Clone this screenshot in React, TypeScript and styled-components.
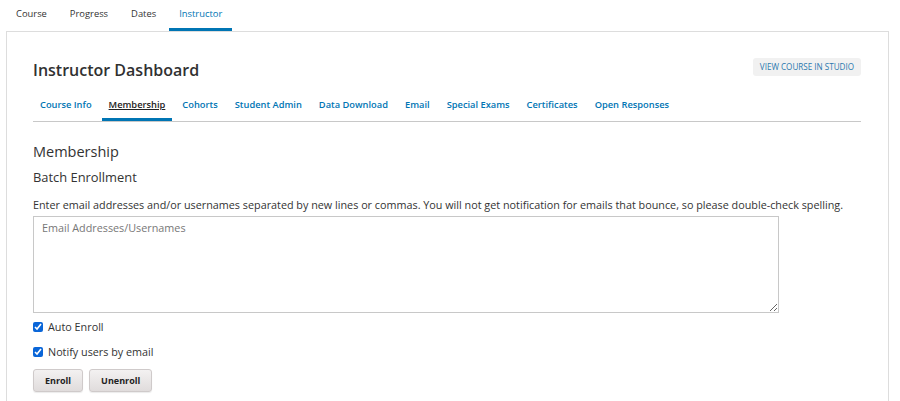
import styled, { createGlobalStyle } from "styled-components";

// ── Global ────────────────────────────────────────────────────────────────────

const GlobalStyle = createGlobalStyle`
  html, body {
    margin: 0;
    padding: 0;
    background: #fff;
    font-family: "Open Sans", "Noto Sans", sans-serif;
    color: #333;
  }
`;

// ── Styled components ─────────────────────────────────────────────────────────

const Page = styled.div`
  width: 900px;
`;

const CourseNav = styled.nav`
  display: flex;
  gap: 3px;
  padding: 0 6px;
  height: 31px;
`;

const CourseNavItem = styled.a<{ $active?: boolean }>`
  display: flex;
  align-items: center;
  box-sizing: border-box;
  height: 31px;
  padding: 0 10px 1px;
  font-size: 9.4px;
  color: ${({ $active }) => ($active ? "#0075b4" : "#333")};
  text-decoration: none;
  border-bottom: 3px solid ${({ $active }) => ($active ? "#0075b4" : "transparent")};
`;

const Panel = styled.section`
  margin-left: 6px;
  width: 883px;
  box-sizing: border-box;
  border: 1px solid #ddd;
  border-bottom: none;
  padding: 27px 27px 20px 26px;
`;

const HeaderRow = styled.div`
  display: flex;
  justify-content: space-between;
  align-items: flex-start;
`;

const Title = styled.h1`
  margin: 0;
  font-size: 16px;
  font-weight: 600;
  line-height: 22px;
  color: #313131;
`;

const StudioButton = styled.a`
  display: inline-block;
  margin-top: -1px;
  padding: 0 7px;
  height: 18px;
  line-height: 18px;
  font-size: 8.1px;
  color: #2a78ae;
  background: #f1f1f1;
  border-radius: 3px;
  text-decoration: none;
`;

const Tabs = styled.div`
  display: flex;
  gap: 3px;
  margin-top: 10px;
  border-bottom: 1px solid #c8c8c8;
`;

const Tab = styled.a<{ $active?: boolean }>`
  padding: 7px 7px 6px;
  font-size: 9.3px;
  font-weight: 600;
  line-height: 14px;
  color: ${({ $active }) => ($active ? "#222" : "#0075b4")};
  text-decoration: ${({ $active }) => ($active ? "underline" : "none")};
  border-bottom: 3px solid ${({ $active }) => ($active ? "#0075b4" : "transparent")};
  white-space: nowrap;
`;

const SectionTitle = styled.h2`
  margin: 20px 0 0;
  font-size: 14.5px;
  font-weight: 400;
  line-height: 20px;
  color: #333;
`;

const SubTitle = styled.h3`
  margin: 6px 0 0;
  font-size: 12.9px;
  font-weight: 400;
  line-height: 18px;
  color: #333;
`;

const Help = styled.p`
  margin: 11px 0 0;
  font-size: 10.8px;
  line-height: 16px;
  color: #333;
  white-space: nowrap;
`;

const EmailBox = styled.textarea`
  display: block;
  margin-top: 3px;
  width: 746px;
  height: 97px;
  box-sizing: border-box;
  border: 1px solid #c8c8c8;
  padding: 3px 8px;
  font-family: "Open Sans", "Noto Sans", sans-serif;
  font-size: 10.8px;
  line-height: 15px;
  color: #333;
  resize: vertical;
  &::placeholder {
    color: #777;
  }
`;

const CheckRow = styled.label<{ $first?: boolean }>`
  display: flex;
  align-items: center;
  margin-top: ${({ $first }) => ($first ? "6px" : "9px")};
  font-size: 10.8px;
  line-height: 16px;
  color: #333;
  input {
    margin: 0 5px 0 0;
    width: 10px;
    height: 10px;
    accent-color: #0a66d8;
  }
`;

const ButtonRow = styled.div`
  display: flex;
  gap: 6px;
  margin-top: 9px;
`;

const ActionButton = styled.button`
  height: 23px;
  padding: 0 11px;
  font-family: "Open Sans", "Noto Sans", sans-serif;
  font-size: 9px;
  font-weight: 700;
  color: #222;
  background: linear-gradient(#f3f1f1, #e0dcdc);
  border: 1px solid #cfcaca;
  border-radius: 3px;
  box-shadow: 0 1px 1px rgba(0, 0, 0, 0.08);
  cursor: pointer;
`;

// ── Data ──────────────────────────────────────────────────────────────────────

const courseNav = ["Course", "Progress", "Dates", "Instructor"];

const tabs = [
  "Course Info",
  "Membership",
  "Cohorts",
  "Student Admin",
  "Data Download",
  "Email",
  "Special Exams",
  "Certificates",
  "Open Responses",
];

// ── App ───────────────────────────────────────────────────────────────────────

export default function App() {
  return (
    <Page>
      <GlobalStyle />
      <CourseNav>
        {courseNav.map((item) => (
          <CourseNavItem key={item} $active={item === "Instructor"}>
            {item}
          </CourseNavItem>
        ))}
      </CourseNav>

      <Panel>
        <HeaderRow>
          <Title>Instructor Dashboard</Title>
          <StudioButton>VIEW COURSE IN STUDIO</StudioButton>
        </HeaderRow>

        <Tabs>
          {tabs.map((tab) => (
            <Tab key={tab} $active={tab === "Membership"}>
              {tab}
            </Tab>
          ))}
        </Tabs>

        <SectionTitle>Membership</SectionTitle>
        <SubTitle>Batch Enrollment</SubTitle>
        <Help>
          Enter email addresses and/or usernames separated by new lines or commas. You will not
          get notification for emails that bounce, so please double-check spelling.
        </Help>
        <EmailBox placeholder="Email Addresses/Usernames" />

        <CheckRow $first>
          <input type="checkbox" defaultChecked />
          Auto Enroll
        </CheckRow>
        <CheckRow>
          <input type="checkbox" defaultChecked />
          Notify users by email
        </CheckRow>

        <ButtonRow>
          <ActionButton>Enroll</ActionButton>
          <ActionButton>Unenroll</ActionButton>
        </ButtonRow>
      </Panel>
    </Page>
  );
}
